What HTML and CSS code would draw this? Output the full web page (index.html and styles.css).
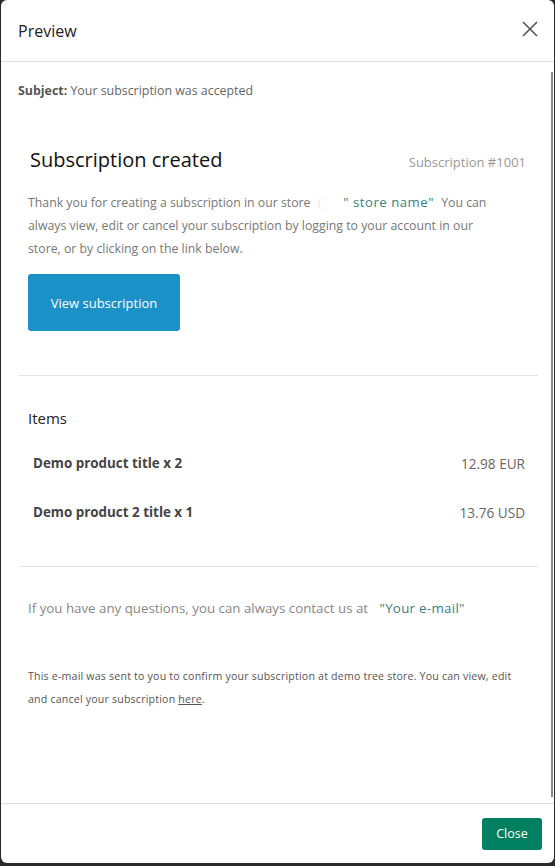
FILE: index.html
```html
<!DOCTYPE html>
<html>
<head>
    <title>Preview</title>
    <link rel="stylesheet" href="styles.css">
</head>
<body>
    <div class="modal">
        <div class="modal-header">
            <h2>Preview</h2>
            <button class="close-x" aria-label="Close">
                <svg width="16" height="16" viewBox="0 0 16 16"><path d="M1 1L15 15M15 1L1 15" stroke="#555" stroke-width="1.6" fill="none"/></svg>
            </button>
        </div>
        <div class="modal-body">
            <p class="subject"><b>Subject:</b> Your subscription was accepted</p>

            <div class="mail">
                <div class="mail-head">
                    <h1>Subscription created</h1>
                    <span class="sub-no">Subscription #1001</span>
                </div>
                <p class="intro">Thank you for creating a subscription in our store <span class="faint">(</span><span class="var">" store name"</span> You can always view, edit or cancel your subscription by logging to your account in our store, or by clicking on the link below.</p>
                <a class="view-btn" href="#">View subscription</a>

                <hr>

                <h3>Items</h3>
                <div class="item">
                    <span class="item-name">Demo product title x 2</span>
                    <span class="item-price">12.98 EUR</span>
                </div>
                <div class="item">
                    <span class="item-name">Demo product 2 title x 1</span>
                    <span class="item-price">13.76 USD</span>
                </div>

                <hr class="last">

                <p class="contact">If you have any questions, you can always contact us at <span class="var">"Your e-mail"</span></p>

                <p class="note">This e-mail was sent to you to confirm your subscription at demo tree store. You can view, edit and cancel your subscription <a href="#">here</a>.</p>
            </div>
            <div class="scroll-thumb"></div>
        </div>
        <div class="modal-footer">
            <button class="close-btn">Close</button>
        </div>
    </div>
</body>
</html>
```

FILE: styles.css
```css
html, body {
    margin: 0;
    height: 100%;
}

body {
    background-color: #2a2a2a;
    font-family: "Open Sans", "Noto Sans", sans-serif;
    color: #555;
}

.modal {
    margin-left: 1px;
    width: 553px;
    height: 863px;
    background: #fff;
    border-radius: 6px;
    display: flex;
    flex-direction: column;
    box-sizing: border-box;
}

.modal-header {
    height: 61px;
    border-bottom: 1px solid #dee2e6;
    display: flex;
    align-items: center;
    justify-content: space-between;
    padding: 0 16px 0 17px;
    flex-shrink: 0;
}

.modal-header h2 {
    margin: 0;
    font-size: 16px;
    font-weight: 400;
    color: #222;
    padding-top: 1px;
}

.close-x {
    border: none;
    background: none;
    padding: 0;
    width: 16px;
    height: 16px;
    cursor: pointer;
    margin-bottom: 3px;
}

.modal-body {
    flex: 1;
    position: relative;
    padding: 0 16px 0 17px;
}

.subject {
    margin: 20px 0 0;
    font-size: 12.4px;
    color: #666;
}

.subject b {
    color: #555;
}

.mail {
    padding-top: 47px;
}

.mail-head {
    display: flex;
    justify-content: space-between;
    align-items: baseline;
    padding: 0 12px 0 12px;
}

.mail h1 {
    margin: 0;
    font-size: 20px;
    font-weight: 400;
    color: #111;
}

.sub-no {
    font-size: 13px;
    color: #999;
}

.intro {
    margin: 18px 0 0;
    padding: 0 40px 0 10px;
    font-size: 12.3px;
    line-height: 23px;
    color: #777;
}

.faint {
    color: #e6e6e6;
    margin: 0 22px 0 4px;
}

.var {
    color: #3a8080;
    font-size: 13.2px;
    letter-spacing: 0.5px;
    margin-right: 4px;
}

.view-btn {
    display: inline-flex;
    align-items: center;
    justify-content: center;
    margin: 14px 0 0 10px;
    width: 152px;
    height: 57px;
    background: #1a92c8;
    color: #fff;
    font-size: 13px;
    text-decoration: none;
    border-radius: 3px;
}

hr {
    border: none;
    border-top: 1px solid #e3e3e3;
    margin: 44px 0 0 1px;
}

.mail h3 {
    margin: 32px 0 0 10px;
    font-size: 15px;
    font-weight: 400;
    color: #222;
}

.item {
    display: flex;
    justify-content: space-between;
    padding: 0 13px 0 15px;
    margin-top: 26px;
    font-size: 13.4px;
}

.item + .item {
    margin-top: 30px;
}

.item-name {
    font-weight: 700;
    color: #444;
}

.item-price {
    color: #666;
    font-size: 13.6px;
}

hr.last {
    margin-top: 44px;
}

.contact {
    margin: 32px 0 0 10px;
    font-size: 13.3px;
    color: #888;
}

.contact .var {
    font-size: 13.3px;
    letter-spacing: 0.3px;
    margin-left: 8px;
}

.note {
    margin: 48px 0 0 10px;
    padding-right: 20px;
    font-size: 10.6px;
    line-height: 23px;
    letter-spacing: 0.2px;
    color: #555;
}

.note a {
    color: #555;
}

.scroll-thumb {
    position: absolute;
    right: 1px;
    top: 10px;
    width: 2px;
    height: 725px;
    background: #888;
}

.modal-footer {
    height: 60px;
    box-sizing: border-box;
    border-top: 1px solid #dee2e6;
    display: flex;
    align-items: center;
    justify-content: flex-end;
    padding: 0 12px;
    flex-shrink: 0;
}

.close-btn {
    width: 60px;
    height: 32px;
    background: #008060;
    color: #fff;
    border: none;
    border-radius: 3px;
    font-family: inherit;
    font-size: 12.5px;
    cursor: pointer;
}
```
